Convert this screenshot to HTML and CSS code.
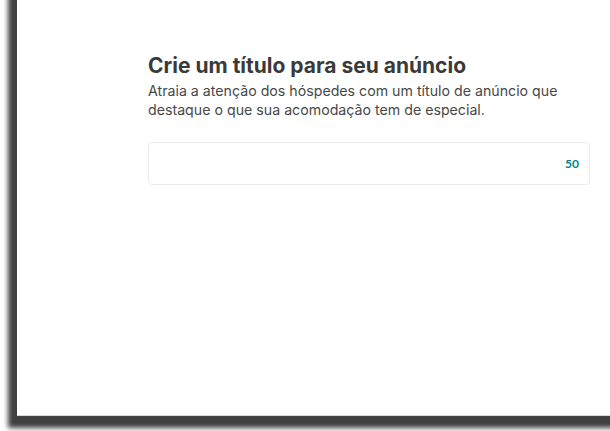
FILE: index.html
```html
<!DOCTYPE html>
<html lang="pt">
<head>
<meta charset="utf-8">
<link rel="stylesheet" href="styles.css">
</head>
<body>
<div class="frame">
  <div class="content">
    <h1 class="title">Crie um título para seu anúncio</h1>
    <p class="subtitle">Atraia a atenção dos hóspedes com um título de anúncio que destaque o que sua acomodação tem de especial.</p>
    <div class="field">
      <span class="count">50</span>
    </div>
  </div>
</div>
</body>
</html>
```
FILE: styles.css
```css
html, body {
  margin: 0;
  padding: 0;
  background: #ffffff;
  overflow: hidden;
}
body {
  width: 610px;
  height: 431px;
  position: relative;
}
.frame {
  margin-left: 17px;
  margin-top: -30px;
  width: 620px;
  height: 446px;
  background: #ffffff;
  box-shadow: -9px 12px 5px #404040;
  border-bottom: 1px solid #d8d8d8;
  box-sizing: border-box;
}
.content {
  padding-top: 83px;
  padding-left: 131px;
  width: 442px;
  font-family: Inter, "Noto Sans", sans-serif;
  color: #484848;
}
.title {
  margin: 0;
  font-size: 21px;
  font-weight: 700;
  line-height: 26px;
  color: #3a3a3a;
}
.subtitle {
  margin: 2px 0 0;
  font-size: 14.2px;
  line-height: 19px;
  color: #484848;
}
.field {
  margin-top: 23px;
  height: 43px;
  border: 1px solid #ebebeb;
  border-radius: 4px;
  box-sizing: border-box;
  display: flex;
  align-items: center;
  justify-content: flex-end;
  padding-right: 10px;
}
.count {
  font-family: Lato, sans-serif;
  font-size: 12px;
  font-weight: 700;
  color: #008489;
}
```
